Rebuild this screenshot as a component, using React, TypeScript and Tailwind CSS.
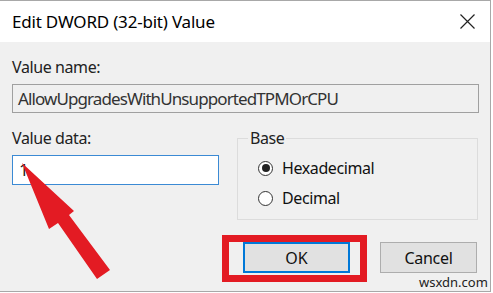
const font = { fontFamily: '"Noto Sans", "Segoe UI", Arial, sans-serif' }

function Radio({ label, checked }: { label: string; checked?: boolean }) {
  return (
    <div className="flex h-[30px] items-center">
      <span className="ml-[20px] flex h-[15px] w-[15px] items-center justify-center rounded-full border-[1.5px] border-[#333] bg-white">
        {checked && <span className="h-[8px] w-[8px] rounded-full bg-[#222]" />}
      </span>
      <span className="ml-[9px] text-[16px] leading-none tracking-[-0.4px] text-[#111]">{label}</span>
    </div>
  )
}

export default function App() {
  return (
    <div className="relative h-[293px] w-[493px] overflow-hidden bg-white" style={font}>
      <div className="flex h-[292px] w-[491px] flex-col border-t border-r border-b border-[#a8a8a8]">
        {/* Title bar */}
        <div className="flex h-[41px] shrink-0 items-center justify-between bg-white pl-[12px] pr-[14px]">
          <span className="text-[17px] tracking-[-0.2px] text-black">Edit DWORD (32-bit) Value</span>
          <svg width="15" height="15" viewBox="0 0 15 15" className="mr-[1px]">
            <path d="M0.5 0.5 L14.5 14.5 M14.5 0.5 L0.5 14.5" stroke="#222" strokeWidth="1.2" fill="none" />
          </svg>
        </div>

        {/* Body */}
        <div className="flex flex-1 flex-col bg-[#f0f0f0] px-[12px] pt-[14px]">
          <div className="text-[16px] leading-[22px] tracking-[-0.4px] text-[#222]">Value name:</div>
          <div className="mt-[6px] flex h-[29px] w-[467px] items-center border border-[#a0a0a0] bg-[#f0f0f0] pl-[5px] text-[17px] tracking-[-0.9px] text-[#333]">
            AllowUpgradesWithUnsupportedTPMOrCPU
          </div>

          <div className="flex">
            <div className="flex w-[207px] flex-col">
              <div className="mt-[14px] text-[16px] leading-[22px] tracking-[-0.4px] text-[#222]">Value data:</div>
              <div className="mt-[6px] flex h-[30px] items-center border-[1.5px] border-[#3b8ad4] bg-white pl-[6px] text-[17px] text-[#222]">
                1
              </div>
            </div>
            <fieldset className="mt-[16px] ml-[18px] h-[91px] w-[241px] border border-[#dcdcdc]">
              <legend className="ml-[10px] px-[2px] text-[16px] leading-[18px] tracking-[-0.4px] text-[#222]">Base</legend>
              <div className="mt-[6px] flex flex-col">
                <Radio label="Hexadecimal" checked />
                <Radio label="Decimal" />
              </div>
            </fieldset>
          </div>

          <div className="mt-[22px] flex">
            <button className="ml-[231px] flex h-[31px] w-[107px] items-center justify-center border-2 border-[#0078d7] bg-[#e1e1e1] text-[16px] text-[#111]">
              OK
            </button>
            <button className="ml-[30px] flex h-[31px] w-[97px] items-center justify-center border border-[#adadad] bg-[#e1e1e1] text-[16px] tracking-[-0.3px] text-[#111]">
              Cancel
            </button>
          </div>
        </div>
      </div>

      {/* Red highlight around OK */}
      <div className="absolute left-[222px] top-[235px] h-[47px] w-[145px] border-[7px] border-[#e31b23]" />

      {/* Red arrow */}
      <svg className="absolute left-0 top-0" width="493" height="293" viewBox="0 0 493 293">
        <polygon points="22,163 49,229 58,223 97,279 110,270 69,215 74,211" fill="#e31b23" />
      </svg>

      {/* Watermark */}
      <span className="absolute left-[419px] top-[275px] text-[13px] leading-[14px] text-[#222]">wsxdn.com</span>
    </div>
  )
}
